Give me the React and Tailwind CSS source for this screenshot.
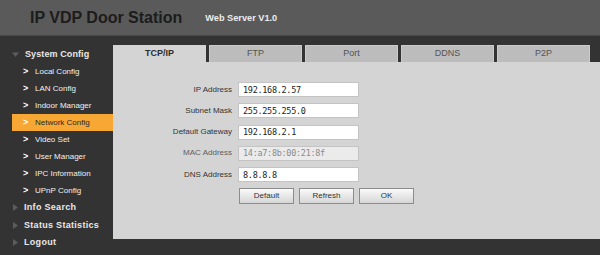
const menu = [
  'Local Config',
  'LAN Config',
  'Indoor Manager',
  'Network Config',
  'Video Set',
  'User Manager',
  'IPC Information',
  'UPnP Config',
]

const tabs = ['TCP/IP', 'FTP', 'Port', 'DDNS', 'P2P']

const fields = [
  { label: 'IP Address', value: '192.168.2.57' },
  { label: 'Subnet Mask', value: '255.255.255.0' },
  { label: 'Default Gateway', value: '192.168.2.1' },
  { label: 'MAC Address', value: '14:a7:8b:00:21:8f', disabled: true },
  { label: 'DNS Address', value: '8.8.8.8' },
]

function Caret({ down }) {
  return (
    <svg width="7" height="7" viewBox="0 0 7 7" className="shrink-0">
      {down ? <path d="M0 1.5h7L3.5 6z" fill="#5c5c5c" /> : <path d="M1 0v7l5-3.5z" fill="#5c5c5c" />}
    </svg>
  )
}

export default function App() {
  return (
    <div className="w-[600px] h-[255px] bg-[#333333] font-['Liberation_Sans',Arial,sans-serif] overflow-hidden">
      {/* Header */}
      <header className="h-[36px] bg-[#5a5a5a] border-b border-[#484848] flex items-center pl-[30px]">
        <h1 className="text-[16px] font-bold text-[#1c1c1c] leading-none">IP VDP Door Station</h1>
        <span className="ml-[23px] mt-[3px] text-[9.2px] font-bold text-[#ececec] leading-none">Web Server V1.0</span>
      </header>

      <div className="flex">
        {/* Sidebar */}
        <nav className="w-[113px] shrink-0 pt-[10px]">
          <div className="h-[17px] flex items-center pl-[12px] gap-[6px]">
            <Caret down />
            <span className="text-[9px] font-bold text-[#e8e8e8] tracking-[0.1px]">System Config</span>
          </div>
          {menu.map((item) => {
            const active = item === 'Network Config'
            return (
              <div
                key={item}
                className={`h-[17px] flex items-center ml-[12px] pl-[11px] text-[8px] ${
                  active ? 'bg-[#f7a733] text-[#2a2a2a]' : 'text-[#f0f0f0]'
                }`}
              >
                <span className="w-[12px] font-bold text-white text-[9px] leading-none">&gt;</span>
                <span>{item}</span>
              </div>
            )
          })}
          {['Info Search', 'Status Statistics', 'Logout'].map((item) => (
            <div key={item} className="h-[17.5px] flex items-center pl-[12px] gap-[5px]">
              <Caret />
              <span className="text-[9px] font-bold text-[#e8e8e8] tracking-[0.3px]">{item}</span>
            </div>
          ))}
        </nav>

        {/* Content */}
        <main className="flex-1 pt-[9px]">
          <div className="flex gap-[3px] h-[17px]">
            {tabs.map((t, i) => (
              <div
                key={t}
                className={`w-[93px] flex items-center justify-center text-[9px] ${
                  i === 0
                    ? 'bg-[#d4d4d4] font-bold text-[#2e2e2e]'
                    : 'bg-[#bcbcbc] border-t border-l border-r border-[#cacaca] text-[#555555]'
                }`}
              >
                {t}
              </div>
            ))}
          </div>
          <section className="h-[177px] bg-[#d4d4d4] pt-[20px]">
            <div className="flex flex-col gap-[6.25px]">
              {fields.map((f) => (
                <div key={f.label} className="flex items-center h-[15px]">
                  <label
                    className={`w-[119px] text-right text-[8px] ${f.disabled ? 'text-[#5e5e5e]' : 'text-[#333333]'}`}
                  >
                    {f.label}
                  </label>
                  <input
                    readOnly
                    value={f.value}
                    className={`ml-[6px] w-[121px] h-[15px] px-[4px] border border-[#c4c4c4] outline-none font-['DejaVu_Sans_Mono',monospace] text-[8.5px] tracking-[-0.3px] ${
                      f.disabled ? 'bg-[#ebebeb] text-[#8a8a8a]' : 'bg-white text-[#222222]'
                    }`}
                  />
                </div>
              ))}
              <div className="flex gap-[5px] pl-[126px]">
                {['Default', 'Refresh', 'OK'].map((b) => (
                  <button
                    key={b}
                    className="w-[55px] h-[16px] text-[8px] text-[#333333] border border-[#8c8c8c] bg-gradient-to-b from-[#fafafa] to-[#d6d6d6]"
                  >
                    {b}
                  </button>
                ))}
              </div>
            </div>
          </section>
        </main>
      </div>
    </div>
  )
}
